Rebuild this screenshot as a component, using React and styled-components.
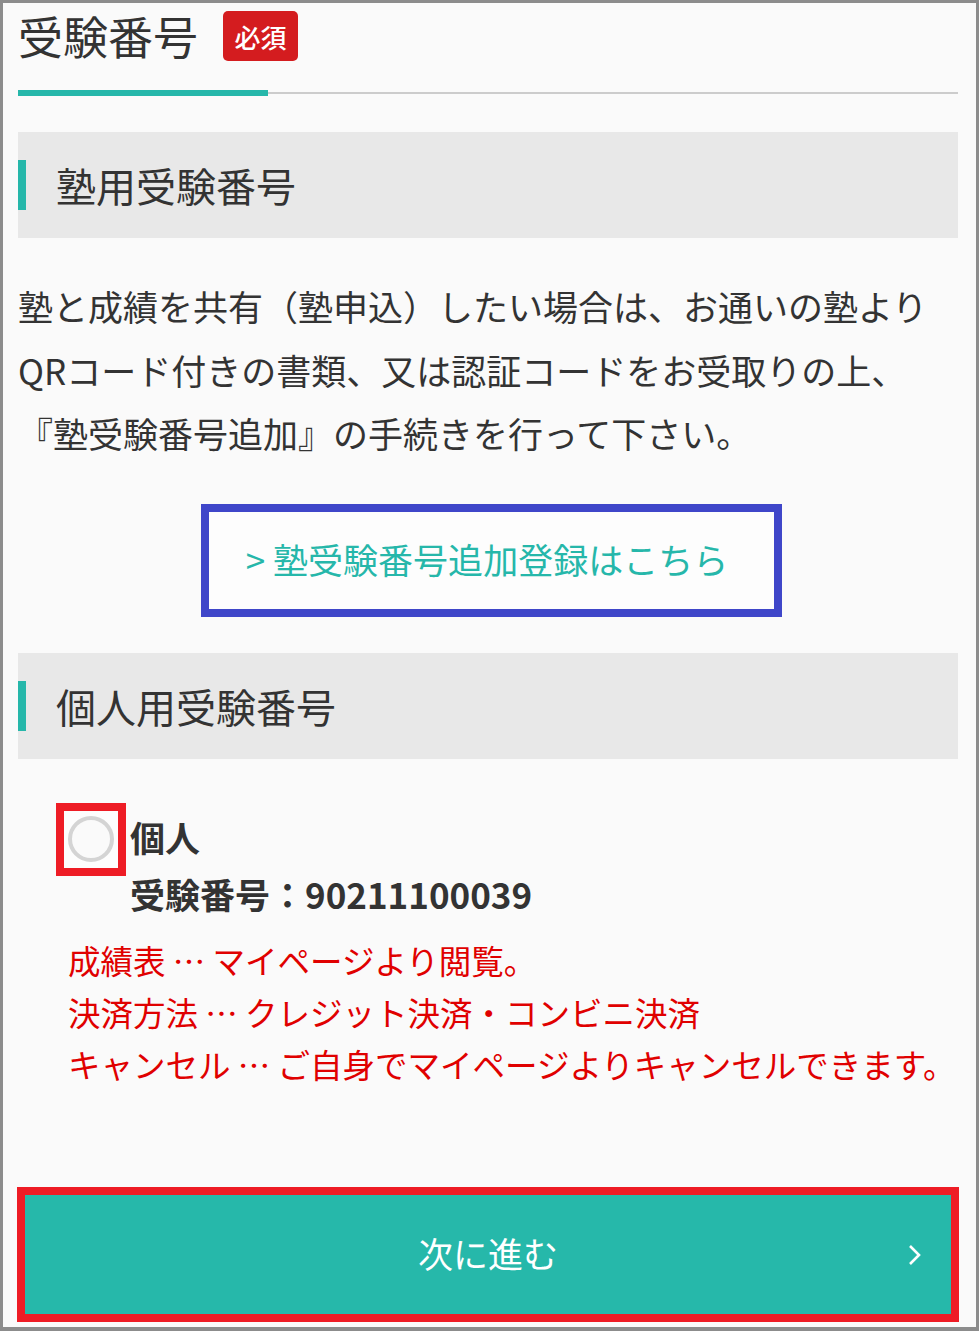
import React from "react";
import styled, { createGlobalStyle } from "styled-components";

const GlobalStyle = createGlobalStyle`
  html, body {
    margin: 0;
    padding: 0;
    background: #fafafa;
  }
  body {
    font-family: "Noto Sans CJK JP", "Noto Sans", sans-serif;
    color: #333;
  }
`;

const Frame = styled.div`
  box-sizing: border-box;
  width: 979px;
  height: 1331px;
  border: 3px solid #8c8c8c;
  border-bottom-width: 4px;
  background: #fafafa;
  padding: 8px 18px 5px 15px;
  display: flex;
  flex-direction: column;
`;

const TitleRow = styled.div`
  display: flex;
  align-items: center;
  height: 50px;
`;

const Title = styled.h1`
  margin: 0;
  font-size: 45px;
  line-height: 50px;
  font-weight: 400;
  color: #333;
`;

const Badge = styled.span`
  margin-left: 25px;
  width: 75px;
  height: 50px;
  border-radius: 5px;
  background: #d41c1f;
  color: #fff;
  font-size: 26px;
  font-weight: 500;
  display: flex;
  align-items: center;
  justify-content: center;
`;

const TabLine = styled.div`
  margin-top: 29px;
  display: flex;
  align-items: center;
  height: 6px;
`;

const TabActive = styled.div`
  width: 250px;
  height: 6px;
  background: #26b7aa;
`;

const TabRest = styled.div`
  flex: 1;
  height: 2px;
  background: #cccccc;
`;

const SectionHead = styled.div`
  margin-top: ${(p) => p.$gap}px;
  height: 106px;
  background: #e8e8e8;
  display: flex;
  align-items: center;
`;

const SectionBar = styled.div`
  width: 8px;
  height: 50px;
  background: #26b7aa;
`;

const SectionTitle = styled.h2`
  margin: 0 0 0 30px;
  font-size: 40px;
  font-weight: 400;
  line-height: 50px;
  color: #333;
`;

const Lead = styled.p`
  margin: 36px 0 0;
  font-size: 35px;
  line-height: 63.5px;
  white-space: nowrap;
  color: #333;
`;

const LinkBox = styled.a`
  box-sizing: border-box;
  margin: 39px auto 0;
  width: 581px;
  height: 113px;
  padding: 0 8px 4px 0;
  border: 8px solid #3f46c9;
  background: #fdfdfd;
  display: flex;
  align-items: center;
  justify-content: center;
  font-size: 35px;
  color: #26b7aa;
  text-decoration: none;
  position: relative;
  left: 3px;
`;

const Choice = styled.label`
  margin: 44px 0 0 38px;
  display: flex;
  align-items: flex-start;
`;

const RadioFrame = styled.span`
  box-sizing: border-box;
  width: 70px;
  height: 73px;
  border: 8px solid #ee1c25;
  background: #fdfdfd;
  display: flex;
  align-items: center;
  justify-content: center;
  flex-shrink: 0;
`;

const RadioCircle = styled.span`
  box-sizing: border-box;
  width: 46px;
  height: 46px;
  border-radius: 50%;
  border: 4px solid #d4d4d4;
  background: #fafafa;
`;

const ChoiceText = styled.div`
  margin: 5px 0 0 4px;
  font-size: 35px;
  font-weight: 700;
  line-height: 57px;
  color: #333;
  white-space: nowrap;
`;

const Notes = styled.div`
  margin: 12px 0 0 50px;
  font-size: 32.5px;
  line-height: 52px;
  color: #e00000;
  white-space: nowrap;
`;

const NextButton = styled.button`
  box-sizing: border-box;
  margin-top: auto;
  margin-left: -1px;
  margin-right: -1px;
  height: 135px;
  border: 8px solid #ee1c25;
  background: #26b8aa;
  color: #fff;
  font-family: inherit;
  font-size: 35px;
  display: grid;
  grid-template-columns: 1fr auto 1fr;
  align-items: center;
  padding: 0;
  cursor: pointer;
`;

const ButtonLabel = styled.span`
  grid-column: 2;
  line-height: 50px;
  position: relative;
  top: -2px;
`;

const Chevron = styled.svg`
  grid-column: 3;
  justify-self: end;
  margin-right: 29px;
  display: block;
`;

export default function App() {
  return (
    <>
      <GlobalStyle />
      <Frame>
        <TitleRow>
          <Title>受験番号</Title>
          <Badge>必須</Badge>
        </TitleRow>
        <TabLine>
          <TabActive />
          <TabRest />
        </TabLine>

        <SectionHead $gap={36}>
          <SectionBar />
          <SectionTitle>塾用受験番号</SectionTitle>
        </SectionHead>

        <Lead>
          塾と成績を共有（塾申込）したい場合は、お通いの塾より
          <br />
          QRコード付きの書類、又は認証コードをお受取りの上、
          <br />
          『塾受験番号追加』の手続きを行って下さい。
        </Lead>

        <LinkBox href="#">&gt; 塾受験番号追加登録はこちら</LinkBox>

        <SectionHead $gap={36}>
          <SectionBar />
          <SectionTitle>個人用受験番号</SectionTitle>
        </SectionHead>

        <Choice>
          <RadioFrame>
            <RadioCircle />
          </RadioFrame>
          <ChoiceText>
            <div>個人</div>
            <div>受験番号：90211100039</div>
          </ChoiceText>
        </Choice>

        <Notes>
          <div>成績表 … マイページより閲覧。</div>
          <div>決済方法 … クレジット決済・コンビニ決済</div>
          <div>キャンセル … ご自身でマイページよりキャンセルできます。</div>
        </Notes>

        <NextButton type="button">
          <ButtonLabel>次に進む</ButtonLabel>
          <Chevron width="14" height="22" viewBox="0 0 14 22">
            <path d="M2 2 L11 11 L2 20" fill="none" stroke="#fff" strokeWidth="2.6" />
          </Chevron>
        </NextButton>
      </Frame>
    </>
  );
}
